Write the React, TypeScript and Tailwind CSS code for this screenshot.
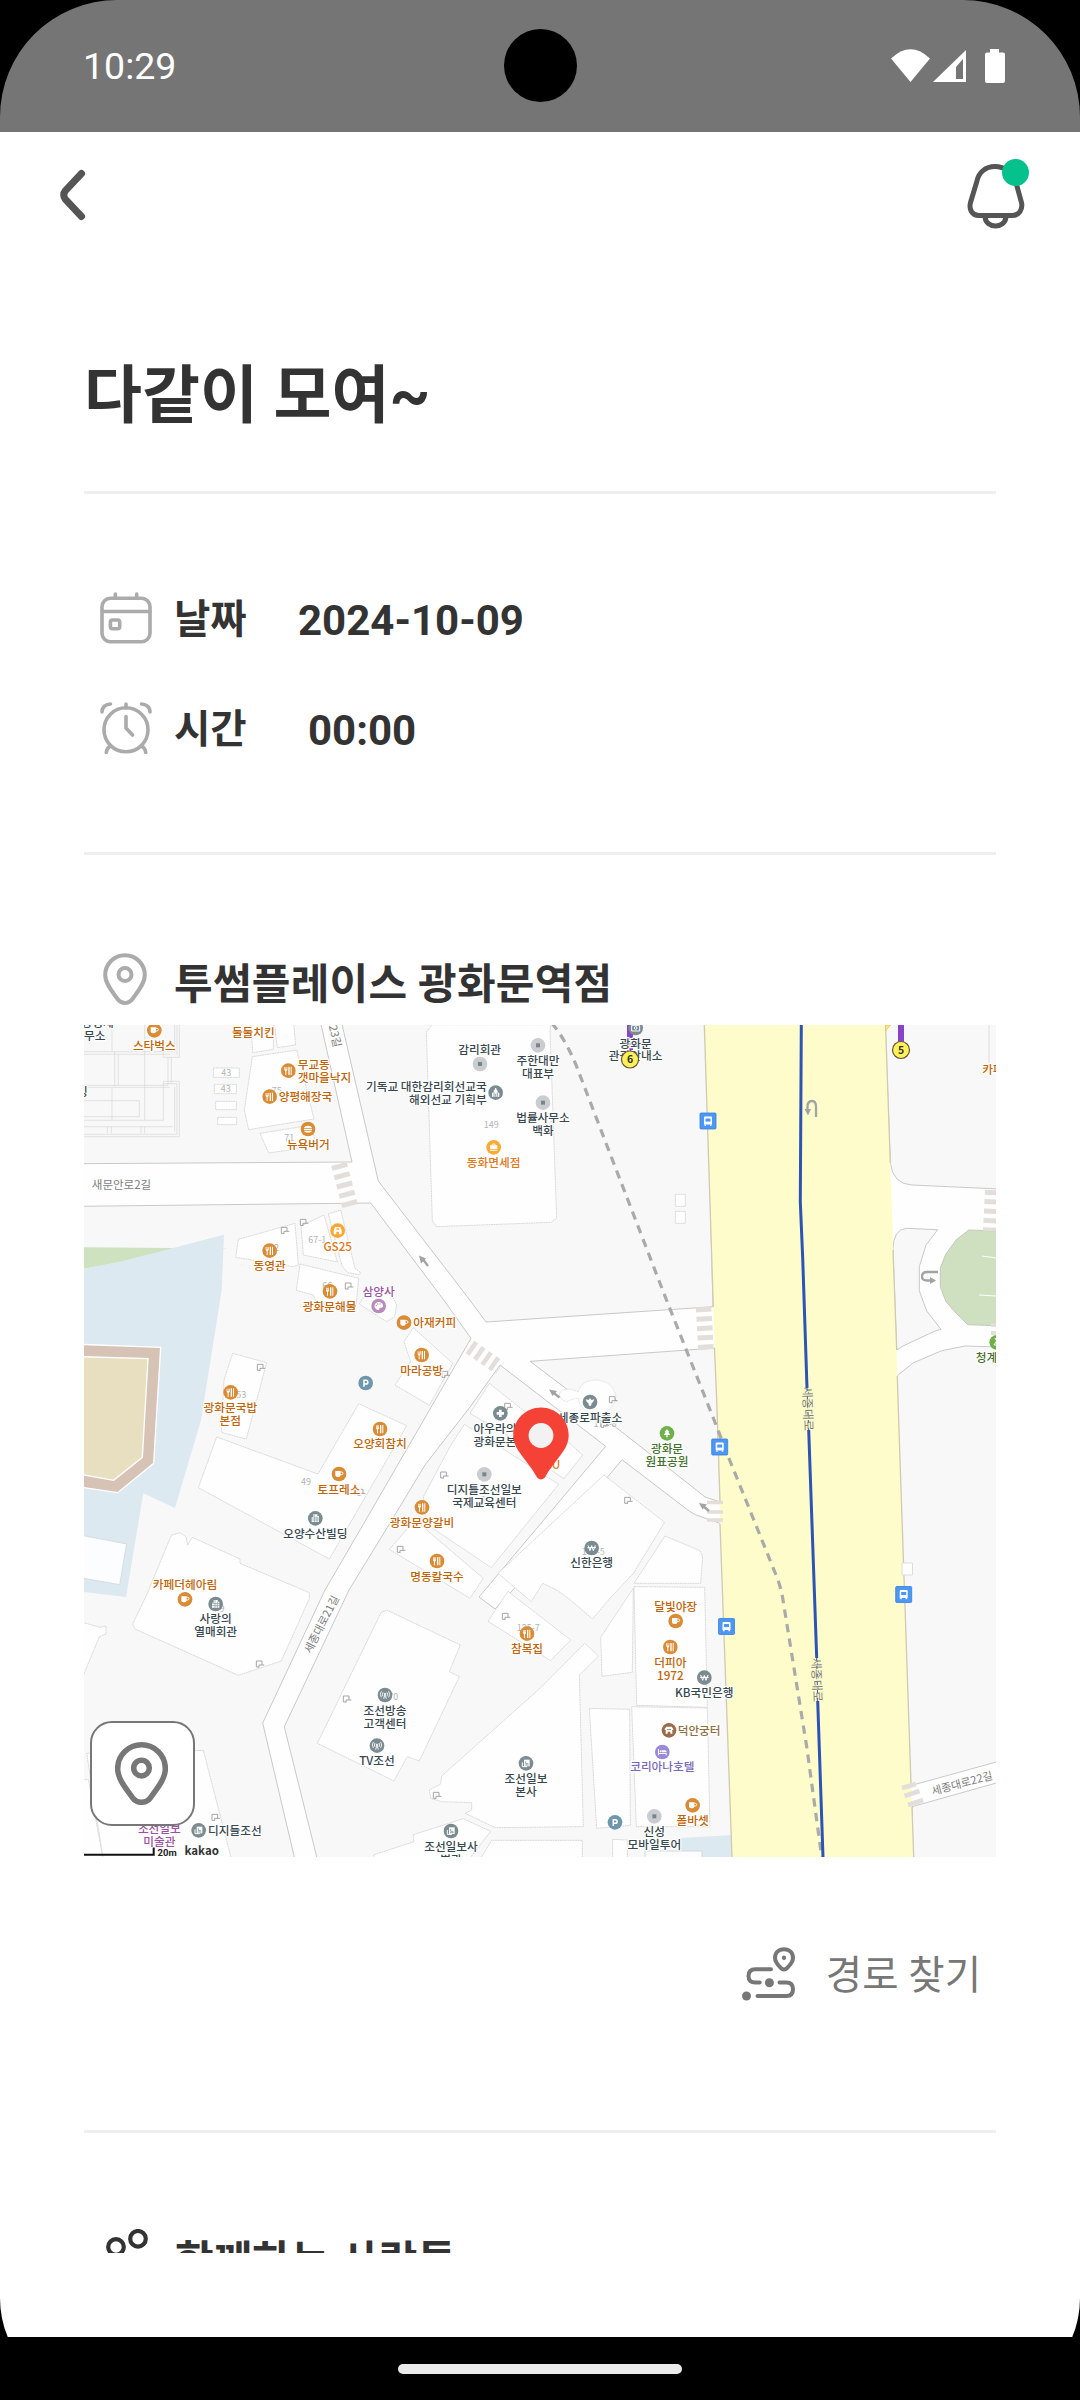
import React from "react";

const KR = "font-['Roboto','Noto_Sans_CJK_KR',sans-serif]";

/* ---------- map data: each tile has its own origin and a 1/3 scale ---------- */

type Poi = [kind: string, x: number, y: number];
type Label = [x: number, y: number, text: string, tone: string, anchor?: "start" | "end" | "middle"];
type Tile = {
  ox: number;
  oy: number;
  buildings?: string[];
  doors?: [number, number][];
  numbers?: [number, number, string][];
  pois?: Poi[];
  labels?: Label[];
};

const TONE: Record<string, string> = {
  food: "#c06408",
  shop: "#e07818",
  dark: "#37474f",
  art: "#9a52a0",
  park: "#43702c",
  hotel: "#7868b8",
  site: "#8d6e3c",
};

const TILES: Tile[] = [
  {
    ox: 80,
    oy: 1020,
    buildings: [
      "400,144 478,144 478,172 400,172",
      "403,193 469,193 469,221 403,221",
      "407,244 469,244 469,269 407,269",
      "413,292 470,292 470,314 413,314",
      "512,0 580,0 580,88 518,98",
      "582,0 640,0 647,75 592,83",
      "517,110 650,90 702,297 506,329 493,270",
      "540,340 690,316 712,378 566,399",
      "475,658 645,610 655,735 640,740 467,712",
      "663,618 732,585 772,726 670,705",
      "745,582 782,570 825,745 842,758 838,764 803,758 786,738",
      "660,732 836,775 828,860 710,850 700,825 649,811",
    ],
    doors: [[604, 622], [661, 598], [796, 789]],
    numbers: [[439, 158, "43"], [437, 205, "43"], [590, 213, "75"], [628, 354, "71"], [712, 658, "67-1"], [582, 684, "62"], [742, 798, "66"], [628, 165, "8"]],
    pois: [["cup", 223, 31], ["fork", 625, 152], ["fork", 569, 230], ["burger", 684, 327], ["store", 773, 632], ["fork", 569, 692], ["fork", 750, 814]],
    labels: [
      [53, 8, "공영제", "dark"],
      [44, 46, "무소", "dark"],
      [7, 216, "빙", "dark"],
      [223, 76, "스타벅스", "food"],
      [520, 38, "둘둘치킨", "food"],
      [653, 135, "무교동", "food", "start"],
      [653, 173, "갯마을낙지", "food", "start"],
      [596, 230, "양평해장국", "food", "start"],
      [685, 373, "뉴욕버거", "food"],
      [773, 679, "GS25", "shop"],
      [569, 738, "동영관", "food"],
    ],
  },
  {
    ox: 360,
    oy: 1020,
    buildings: [
      "212,20 199,36 217,603 230,620 574,607 590,594 570,30 573,14 214,14",
      "946,523 976,523 976,559 946,559",
      "946,574 976,574 976,610 946,610",
    ],
    numbers: [[394, 314, "149"], [574, 306, "3"]],
    pois: [["plain", 534, 76], ["plain", 360, 132], ["church", 407, 218], ["plain", 549, 248], ["bag", 401, 382], ["camera", 827, 24]],
    labels: [
      [359, 90, "감리회관", "dark"],
      [534, 122, "주한대만", "dark"],
      [534, 160, "대표부", "dark"],
      [380, 199, "기독교 대한감리회선교국", "dark", "end"],
      [380, 239, "해외선교 기획부", "dark", "end"],
      [549, 293, "법률사무소", "dark"],
      [549, 332, "백화", "dark"],
      [401, 428, "동화면세점", "shop"],
      [827, 70, "광화문", "dark"],
      [827, 108, "관광안내소", "dark"],
      [56, 814, "삼양사", "art"],
    ],
  },
  {
    ox: 80,
    oy: 1290,
    buildings: [
      "458,190 560,218 499,447 424,427 432,270",
      "410,441 714,552 836,341 980,407 748,807 355,593",
      "848,25 925,-5 950,45 944,80 920,95 838,42",
    ],
    doors: [[532, 223], [832, 598]],
    numbers: [[484, 314, "53"], [678, 576, "49"]],
    pois: [["art", 896, 48], ["fork", 452, 307], ["parking", 857, 279], ["fork", 900, 417], ["cup", 777, 552], ["tower", 706, 685]],
    labels: [
      [749, 50, "광화문해물", "food"],
      [451, 353, "광화문국밥", "food"],
      [451, 392, "본점", "food"],
      [900, 461, "오양회참치", "food"],
      [777, 599, "토프레소", "food"],
      [706, 731, "오양수산빌딩", "dark"],
    ],
  },
  {
    ox: 360,
    oy: 1290,
    buildings: [
      "160,113 278,220 208,346 105,285 152,215 132,155",
      "388,280 520,385 450,440 330,370",
      "313,403 596,583 394,833 200,703 190,620 270,470",
      "580,415 668,495 612,566 520,505",
      "165,690 370,865 330,925 88,778",
      "732,555 914,697 820,850 748,927 698,987 625,925 590,900 548,880 514,935 414,850",
      "915,738 1020,782 1028,800 1022,880 822,880",
    ],
    doors: [[434, 340], [748, 320], [246, 244], [242, 546], [112, 769], [794, 622], [723, 394]],
    numbers: [[700, 785, "175-5"], [735, 400, "175-8"], [378, 628, "16"], [712, 326, "1"]],
    pois: [["cup", 132, 98], ["fork", 185, 195], ["cross", 421, 370], ["police", 690, 336], ["tree", 921, 430], ["plain", 373, 553], ["fork", 186, 652], ["fork", 231, 813], ["won", 695, 774]],
    labels: [
      [160, 98, "아재커피", "food", "start"],
      [185, 241, "마라공방", "food"],
      [421, 416, "아우라의원", "dark"],
      [421, 455, "광화문본점", "dark"],
      [690, 382, "세종로파출소", "dark"],
      [921, 476, "광화문", "park"],
      [921, 515, "원표공원", "park"],
      [373, 599, "디지틀조선일보", "dark"],
      [373, 638, "국제교육센터", "dark"],
      [186, 698, "광화문양갈비", "food"],
      [231, 859, "명동칼국수", "food"],
      [695, 819, "신한은행", "dark"],
      [577, 524, "CU", "shop"],
    ],
  },
  {
    ox: 80,
    oy: 1580,
    buildings: [
      "200,45 268,-120 275,-135 300,-142 318,-130 323,-105 337,-128 480,-63 480,-50 688,38 688,55 604,243 475,286 165,147 158,132",
      "920,90 1141,195 1108,275 1138,290 1018,543 982,530 942,603 712,490 903,98",
      "0,602 25,598 70,840 0,840",
      "20,520 370,511 455,840 70,840",
      "0,125 60,142 78,138 78,162 58,170 0,310",
    ],
    doors: [[529, 243], [790, 348], [396, 703]],
    numbers: [[426, 85, "9"], [940, 350, "70"]],
    pois: [["cup", 315, 58], ["tower", 407, 72], ["radio", 915, 345], ["radio", 891, 497], ["news", 356, 751]],
    labels: [
      [315, 14, "카페더헤아림", "food"],
      [407, 117, "사랑의", "dark"],
      [407, 156, "열매회관", "dark"],
      [915, 391, "조선방송", "dark"],
      [915, 430, "고객센터", "dark"],
      [891, 543, "TV조선", "dark"],
      [238, 747, "조선일보", "art"],
      [238, 785, "미술관", "art"],
      [384, 751, "디지들조선", "dark", "start"],
    ],
  },
  {
    ox: 380,
    oy: 1580,
    buildings: [
      "384,34 572,180 512,242 324,124",
      "614,190 656,228 598,285 610,740 346,743 255,700 275,690 275,668 185,665 152,655 148,630 182,612 185,588 480,325",
      "100,764 250,716 332,754 250,860 0,860 -20,825 102,785",
      "305,830 335,781 607,781 607,860 290,860",
      "760,25 757,277 666,289 662,172",
      "762,20 974,22 982,382 770,376",
      "755,380 982,384 990,740 769,740",
      "628,385 749,388 751,736 650,745",
      "698,778 742,780 742,860 698,860",
    ],
    doors: [[367, 100], [160, 637]],
    numbers: [[445, 142, "125-7"]],
    pois: [["fork", 441, 161], ["cup", 887, 123], ["fork", 871, 201], ["won", 973, 293], ["site", 867, 451], ["bed", 847, 516], ["news", 438, 550], ["cup", 938, 676], ["plain", 823, 709], ["parking", 705, 727], ["news", 213, 753]],
    labels: [
      [441, 207, "참복집", "food"],
      [887, 80, "달빛야장", "food"],
      [871, 247, "더피아", "food"],
      [871, 287, "1972", "food"],
      [973, 338, "KB국민은행", "dark"],
      [893, 452, "덕안궁터", "site", "start"],
      [847, 560, "코리아나호텔", "hotel"],
      [438, 596, "조선일보", "dark"],
      [438, 635, "본사", "dark"],
      [938, 722, "폴바셋", "food"],
      [823, 755, "신성", "dark"],
      [823, 794, "모바일투어", "dark"],
      [213, 799, "조선일보사", "dark"],
      [213, 838, "별관", "dark"],
    ],
  },
];

const BADGE: Record<string, string> = {
  fork: "#d98b35",
  cup: "#d98b35",
  burger: "#d98b35",
  store: "#f9a732",
  bag: "#fbaa33",
  art: "#b98bbd",
  parking: "#6f97ac",
  tree: "#6fb04a",
  site: "#9a6c4a",
  bed: "#9a8ad6",
  plain: "#cbccd0",
};

function Glyph({ kind }: { kind: string }) {
  switch (kind) {
    case "fork":
      return (
        <g fill="#fff">
          <path d="M-12-11h2v7h1.500v-7h2v7h1.500v-7h2V-2l-3 4v11h-3V2l-3-4z" />
          <path d="M0-12h4v25h-4zM7-12h3v25h-3z" />
        </g>
      );
    case "cup":
      return (
        <g>
          <path d="M-11 -9H5V3a6 6 0 0 1-6 6h-4a6 6 0 0 1-6-6z" fill="#fff" />
          <path d="M5 -6h3a4 4 0 0 1 0 8H4" fill="none" stroke="#fff" strokeWidth="3" />
        </g>
      );
    case "burger":
      return <path d="M-12-2c0-10 24-10 24 0zM-12 0h24v3h-24zM-12 5h24c0 7-24 7-24 0z" fill="#fff" />;
    case "store":
      return <path fillRule="evenodd" d="M-8-11H8l4 10v12H4V3h-8v8h-8V-1zM-4-7v4h8v-4z" fill="#fff" />;
    case "bag":
      return (
        <g fill="#fff">
          <path d="M-11-6h22v11h-22zM-11 7h22v3h-22z" />
          <path d="M-4-6v-4h8v4" fill="none" stroke="#fff" strokeWidth="2.5" />
        </g>
      );
    case "art":
      return (
        <g>
          <path d="M0-12C-18-10-15 12 0 12c4 0 0-6 4-7s9 1 9-6S7-12 0-12z" fill="#fff" />
          <g fill="#b98bbd">
            <circle cx="-7" cy="-1" r="2" />
            <circle cx="-3" cy="-6" r="2" />
            <circle cx="4" cy="-6" r="2" />
          </g>
        </g>
      );
    case "plain":
      return <path d="M-6-6H6V6H-6z" fill="#78868c" />;
    case "tower":
      return (
        <g>
          <path d="M-6-12H6v5h5v18H-11V-4h5z" fill="#fff" />
          <path d="M-11-1H11M-11 5H11M-2-12V11M5-6V11" stroke="#7b8b92" strokeWidth="1.8" />
        </g>
      );
    case "church":
      return (
        <g>
          <path d="M-2-14H2v4l4 4v5l5 2v11h-22V1l5-2v-5l4-4z" fill="#fff" />
          <path d="M-5-1V12M5-1V12M0 3v9" stroke="#7b8b92" strokeWidth="2.4" />
        </g>
      );
    case "cross":
      return <path d="M-4-11h8v7h7v8h-7v7h-8v-7h-7v-8h7z" fill="#fff" />;
    case "camera":
      return (
        <g fill="none" stroke="#fff" strokeWidth="3">
          <path d="M-12-8h24V9h-24z" />
          <circle r="4" />
        </g>
      );
    case "police":
      return <path d="M-13-8l9 2 4-6 4 6 9-2-4 9-4 2-1 6-4 4-4-4-1-6-4-2z" fill="#fff" />;
    case "tree":
      return <path d="M0-13l7 9H4l6 9H2v7h-4v-7h-8l6-9h-3z" fill="#fff" />;
    case "radio":
      return (
        <g fill="none" stroke="#fff" strokeWidth="2.6">
          <path d="M-6-8q-4 6 0 12M6-8q4 6 0 12M-11-11q-6 9 0 18M11-11q6 9 0 18M0-2l-4 14M0-2l4 14" />
          <circle cy="-3" r="2" fill="#fff" />
        </g>
      );
    case "news":
      return (
        <g>
          <path d="M-6-11h17v20h-17z" fill="#fff" />
          <path d="M-11-3v13h14" fill="none" stroke="#fff" strokeWidth="3" />
          <path d="M-1-6v7h8M-3 5H8" fill="none" stroke="#7b8b92" strokeWidth="2.4" />
        </g>
      );
    case "site":
      return <path fillRule="evenodd" d="M-13-4l5-7H8l5 7v3h-3v11h-6V4h-8v6h-6V-1h-3zM-6-4H6v2H-6z" fill="#fff" />;
    case "bed":
      return (
        <g fill="#fff">
          <path d="M-13-9h3V3h23v7h-3V6h-20v4h-3z" />
          <path d="M-1-5H9q4 0 4 6H-1z" />
          <circle cx="-5" cy="-2" r="3" />
        </g>
      );
    case "won":
      return <path d="M-11-8L-5 8 0-7 5 8 11-8M-13-1H13" fill="none" stroke="#fff" strokeWidth="3" />;
    case "parking":
      return <path d="M-5 11V-8H1a5.5 5.5 0 0 1 0 11H-5" fill="none" stroke="#fff" strokeWidth="4.6" />;
    default:
      return null;
  }
}

function MapLabel({ x, y, text, tone, anchor = "middle" }: { x: number; y: number; text: string; tone: string; anchor?: "start" | "end" | "middle" }) {
  return (
    <text
      x={x}
      y={y + 13}
      textAnchor={anchor}
      fill={TONE[tone]}
      stroke="#fff"
      strokeWidth="7"
      strokeLinejoin="round"
      paintOrder="stroke"
      className="text-[35px] font-medium font-['Noto_Sans_CJK_KR',sans-serif]"
    >
      {text}
    </text>
  );
}

function BusStop({ x, y }: { x: number; y: number }) {
  return (
    <g transform={`translate(${x} ${y})`}>
      <rect x="-8" y="-8" width="16" height="16" rx="1" fill="#4c97f4" stroke="#357fe0" strokeWidth=".8" />
      <path d="M-4 -3.5q0-1 1-1h6q1 0 1 1V3.5H-4z" fill="#fff" />
      <path d="M-2.5-2.5h5V.6h-5z" fill="#4c97f4" />
      <path d="M-3.5 3.5h1.5v1.3h-1.5zM2 3.5h1.5v1.3H2z" fill="#fff" />
    </g>
  );
}

const WAY = "#c9c9c9";

function StreetMap() {
  return (
    <svg viewBox="84 1025 912 832" className="block h-[832px] w-[912px]">
      <rect x="84" y="1025" width="912" height="832" fill="#fefefe" />
      {/* city blocks between the streets */}
      <g fill="#f8f8f8" stroke={WAY} strokeWidth="1">
        <path d="M80 1020H320L352 1162 80 1163.7z" />
        <path d="M80 1206.3L370.7 1203 443 1299 471 1338.3 360 1530 325 1590 262.7 1723 295 1860H80z" />
        <path d="M341 1020L378.3 1181 469 1299 486 1322 713 1306.7 706 1020z" />
        <path d="M530 1361.3L716 1348 720 1502 705 1497 690 1485 616.7 1428 566.7 1389z" />
        <path d="M500 1365L605.7 1446.3 479 1597 495 1609 513 1590 622 1459.7 690 1511.7 696 1515 722 1524 733 1860H317.5L284.3 1726.7 349 1590 390 1523 425 1465 471 1405.7z" />
        <path d="M885 1020L890.3 1163Q893 1184 911.7 1185L1000 1189V1020z" />
        <path d="M896.7 1350L893 1250Q893 1229 906.7 1228.3L937.7 1229.7 926 1245 919.3 1266.7V1290.7L926.7 1311 941 1329.3 935 1331 903 1346z" />
        <path d="M897.3 1375.7L913 1363 941.7 1350.7 965 1346 1000 1347V1761L903 1787.7z" />
        <path d="M912 1806.7L1000 1782V1860H913z" />
      </g>
      <path d="M997 1231L968.7 1230 956 1240 945.7 1254.3 940.3 1268V1286.7L946 1301.7 956 1313 967.7 1324.7 997 1325.7z" fill="#cfe0c0" stroke="#c5c9c0" />
      <path d="M982 1256l14 2M979 1295l17 1" stroke="#fff" />
      <path d="M989 1025v38" stroke="#ddd" />

      {/* water, lawn and the arena */}
      <path d="M84 1247.3L227 1248.5 123 1262 84 1268.7z" fill="#cfe2c0" />
      <path d="M84 1268.7L123 1261 224 1234.7 221.7 1290 201 1420 175 1508 143.3 1493.3 126 1597 84 1592z" fill="#dce9f0" />
      <g transform="translate(80 1290) scale(.33333)">
        <path d="M0 163L242 172 221 520 113 608 0 591z" fill="#d7c2b6" stroke="#fff" strokeWidth="4" />
        <path d="M0 200L204 206 187 502 101 571 0 553z" fill="#e8dfc0" stroke="#fff" strokeWidth="4" />
        <path d="M0 735L140 762 119 884 0 863z" fill="#fbfdfe" stroke="#d3d9dc" strokeWidth="2.5" />
      </g>
      <path d="M680 1838L733 1835V1857H680z" fill="#dce9f0" />
      <path d="M645 1851h57v8h-57z" fill="#fbfdfe" stroke="#d3d9dc" />

      {/* parking structure outline */}
      <g transform="translate(80 1020) scale(.33333)" fill="none" stroke="#d6d6d6" strokeWidth="2">
        <path d="M96 0V95M194 0V300M104 95V200M115 103V195M12 95H280M12 103H270M298 0V112H250V95M291 0V105M284 0V98M274 112V190M264 112V196M12 202H270M12 196H264M96 205V300M12 242H178V290H12M12 301H250V184H298V350H12M250 191H291V343H12M284 200V335M12 320H278M82 320V340M94 320V340M183 320V340M194 320V340" />
      </g>

      {/* crosswalks */}
      <g stroke="#e3deda" fill="none">
        <path d="M339 1164L350 1206" strokeWidth="16" strokeDasharray="5 4.6" />
        <path d="M470 1347L500 1368" strokeWidth="15" strokeDasharray="4.6 4.4" />
        <path d="M703.5 1307L706 1350" strokeWidth="15.5" strokeDasharray="5 4.4" />
        <path d="M992 1190L990 1231" strokeWidth="14" strokeDasharray="5 4.4" />
        <path d="M994 1323v14" strokeWidth="6" strokeDasharray="4 4" />
      </g>

      {/* boulevard */}
      <path d="M704.3 1025L713.3 1306.7 716.7 1400 720 1523 732 1857H913.7L898 1400 896.7 1350 890.3 1163 885.7 1025z" fill="#fffccc" />
      <path d="M704.3 1025L713.3 1306.7M714.5 1348L716.7 1400 720 1501M720 1524L732 1857M885.7 1030L890.3 1163M893 1250L896.7 1350M897.3 1376L898 1400 911 1784M912 1807L913.7 1857" fill="none" stroke="#cfcab2" strokeWidth="1.3" />
      <path d="M885.5 1031l5-6h-5z" fill="#ffe680" stroke="#e0b050" strokeWidth=".6" />
      <g stroke="#e3deda" fill="none" strokeWidth="4.5">
        <path d="M707 1502.5h16M707 1512h16M707 1520h16" strokeWidth="3.5" />
        <path d="M902 1788l14-4M904.5 1796l15-5M908 1805l15-5" />
      </g>
      <path d="M902 1563h10.5v12H902z" fill="#fefefe" stroke="#ddd" />

      {/* buildings, lots and entrances */}
      {TILES.map((t) => (
        <g key={`b${t.ox}-${t.oy}`} transform={`translate(${t.ox} ${t.oy}) scale(.33333)`}>
          {t.buildings?.map((p) => (
            <polygon key={p} points={p} fill="#fefefe" stroke="#d4d4d4" strokeWidth="2.6" strokeDasharray="6 1.5" />
          ))}
          {t.numbers?.map(([x, y, n]) => (
            <text key={`${x}-${y}`} x={x} y={y + 10} textAnchor="middle" fill="#b4b4b4" className="text-[27px] font-['Noto_Sans_CJK_KR',sans-serif]">
              {n}
            </text>
          ))}
          {t.doors?.map(([x, y]) => (
            <path key={`${x}-${y}`} d={`M${x + 8} ${y + 18}h-8v-18h17v12M${x + 8} ${y + 20}v-8h16`} fill="none" stroke="#a0a0a0" strokeWidth="2.8" />
          ))}
        </g>
      ))}
      <g transform="translate(360 1290) scale(.33333)">
        <path d="M655 305Q665 270 710 270 760 275 768 320 760 365 710 375 660 365 655 325 640 325 620 335 600 330 598 312 605 292 640 300z" fill="#fefefe" stroke="#d9d9d9" strokeWidth="2.4" strokeDasharray="5 2" />
        <path d="M756 338h-8v-18h17v12M756 340v-8h16" fill="none" stroke="#a0a0a0" strokeWidth="2.8" />
      </g>

      {/* one-way arrows and U-turns */}
      <g fill="none" stroke="#a3a3a3" strokeWidth="2.3">
        <path d="M428 1266l-6-8M559.5 1397.5l-7-5.5M709 1511l-6-5" />
        <path d="M816 1117v-10q0-6-4-6-4.5 0-4.5 6v5M938 1272h-11q-5 0-5 4.5 0 4 5 4h6" />
      </g>
      <g fill="#a3a3a3">
        <path d="M419 1255.5l7 3-5 5zM549 1389.5l8 1.5-4.5 5zM699 1503l8 1.5-4.5 5zM804.5 1109h6.5l-3 6.5zM930 1277v7l6-3.5z" />
      </g>

      {/* tunnel and metro line */}
      <path
        d="M551.7 1023Q566 1040 576.7 1066.7L606.7 1145 665.7 1298 713.3 1418 728.3 1456.7 776 1575Q781 1587 783 1600L806.7 1746.7 822 1859"
        fill="none"
        stroke="#aaaaaa"
        strokeWidth="3.2"
        strokeDasharray="8.4 6.3"
      />
      <path d="M801.3 1025L800.3 1201.7 802.7 1258 807 1388M808.7 1430L816.7 1658M817.7 1701L823 1857" fill="none" stroke="#2d53b4" strokeWidth="3" />
      <path d="M807 1388l1.7 42M816.7 1658l1 43" fill="none" stroke="#2d53b4" strokeWidth="1" strokeDasharray="3 5" />
      <path d="M901 1025v18M630 1025v30" stroke="#8843c8" strokeWidth="6" />

      {/* road names */}
      <g fill="#7d7d7d" textAnchor="middle" className="text-[11px] font-['Noto_Sans_CJK_KR',sans-serif]">
        <text x="121.5" y="1189" className="text-[11.5px]">새문안로2길</text>
        <text transform="translate(325 1626) rotate(-63)">세종대로21길</text>
        <text transform="translate(963 1787) rotate(-15)">세종대로22길</text>
        <text transform="translate(803.5 1409) rotate(88)" className="text-[12px]">세종대로</text>
        <text transform="translate(812.5 1680) rotate(88)" className="text-[12px]">세종대로</text>
        <text transform="translate(329 1027) rotate(77)">종로23길</text>
      </g>

      {/* points of interest */}
      {TILES.map((t) => (
        <g key={`p${t.ox}-${t.oy}`} transform={`translate(${t.ox} ${t.oy}) scale(.33333)`}>
          {t.pois?.map(([k, x, y]) => (
            <g key={`${x}-${y}`} transform={`translate(${x} ${y})`}>
              <circle r="22" fill={BADGE[k] ?? "#7b8b92"} />
              <Glyph kind={k} />
            </g>
          ))}
          {t.labels?.map(([x, y, text, tone, anchor]) => (
            <MapLabel key={`${x}-${y}`} x={x} y={y} text={text} tone={tone} anchor={anchor} />
          ))}
        </g>
      ))}
      <g transform="translate(670 1020) scale(.33333)">
        <circle cx="980" cy="967" r="22" fill="#6fb04a" />
        <path d="M975 954l5 9-8 12h8" fill="none" stroke="#fff" strokeWidth="3" />
        <MapLabel x={917} y={1012} text="청계광장" tone="park" anchor="start" />
        <MapLabel x={937} y={150} text="카페" tone="food" anchor="start" />
      </g>
      {[
        [901, 1050, "5"],
        [630, 1059.5, "6"],
      ].map(([x, y, n]) => (
        <g key={n}>
          <circle cx={x} cy={y} r="8.5" fill="#fff15a" stroke="#6b5134" strokeWidth="1.2" />
          <text x={x} y={Number(y) + 3.8} textAnchor="middle" fill="#333" className="text-[10.5px] font-bold font-['Noto_Sans_CJK_KR',sans-serif]">
            {n}
          </text>
        </g>
      ))}
      <BusStop x={708} y={1121} />
      <BusStop x={719.7} y={1447} />
      <BusStop x={726.5} y={1626.5} />
      <BusStop x={903.7} y={1594.5} />

      {/* selected place */}
      <path d="M541 1407.5c-15.3 0-27.7 12.2-27.7 27.7 0 5.3 1.7 10 4.3 14.3 5 8 13.8 17.5 19.2 27.5 2 3.2 6.4 3.2 8.4 0 5.4-10 14.2-19.5 19.2-27.5 2.6-4.3 4.3-9 4.3-14.3 0-15.5-12.4-27.7-27.7-27.7z" fill="#f44336" />
      <circle cx="541" cy="1435.5" r="12.4" fill="#f2f2f2" />

      {/* scale bar */}
      <path d="M84 1854.7H153.7V1847.5" fill="none" stroke="#111" strokeWidth="2" />
      <text x="157.5" y="1856" fill="#222" stroke="#fff" strokeWidth="1.5" paintOrder="stroke" className="text-[9.5px] font-bold font-['Roboto',sans-serif]">20m</text>
      <text x="184.5" y="1855" fill="#333" className="text-[11.5px] font-bold font-['Noto_Sans_CJK_KR',sans-serif]">kakao</text>
    </svg>
  );
}

/* ---------- interface icons ---------- */

function PinOutline({ className, sw }: { className: string; sw: number }) {
  return (
    <svg viewBox="0 0 44 52" className={className} fill="none" stroke="currentColor" strokeWidth={sw}>
      <path d="M22 2.2C11 2.2 2.2 11 2.2 22c0 8.5 7 16.5 12.3 24 3.8 5.2 11.2 5.2 15 0C34.8 38.5 41.8 30.5 41.8 22 41.8 11 33 2.2 22 2.2z" />
      <circle cx="22" cy="21.5" r="6.5" />
    </svg>
  );
}

function CalendarIcon() {
  return (
    <svg viewBox="0 0 52 52" className="h-[52px] w-[52px] shrink-0" fill="none" stroke="#ababab" strokeWidth="3.6" strokeLinecap="round">
      <rect x="2" y="6.2" width="48" height="43.5" rx="8.5" />
      <path d="M2 19.5H50M15.3 2V6M36.7 2V6" />
      <rect x="10.4" y="28" width="9.3" height="8.8" rx="2" />
    </svg>
  );
}

function ClockIcon() {
  return (
    <svg viewBox="0 0 52 52" className="h-[52px] w-[52px] shrink-0" fill="none" stroke="#ababab" strokeWidth="3.6" strokeLinecap="round" strokeLinejoin="round">
      <circle cx="26" cy="27.8" r="22" />
      <path d="M26 2V6M26 14.5V26l6.5 7M2 10C2 5 6 2 10.5 2M50 10C50 5 46 2 41.5 2M10.5 44Q6.5 46.5 6.3 50.5M41.5 44Q45.5 46.5 45.7 50.5" />
    </svg>
  );
}

function BellIcon() {
  return (
    <svg viewBox="0 0 62 70" className="h-[70px] w-[62px] overflow-visible">
      <path d="M29 7.5C19.5 7.500 12.500 13.500 11 22L4.500 43.500C2.700 50.500 6.200 56.500 12.700 56.500H46.500C53 56.500 57 50.500 55.500 43.500L49.500 22C47.500 13.500 38.500 7.500 29 7.500z" fill="none" stroke="#555" strokeWidth="5" />
      <path d="M19 58C20 70 39 70 40 58" fill="none" stroke="#555" strokeWidth="5" />
      <circle cx="49.5" cy="13.5" r="13.5" fill="#05c18c" />
    </svg>
  );
}

function RouteIcon() {
  return (
    <svg viewBox="0 0 54 54" className="h-[54px] w-[54px]" fill="none" stroke="#777" strokeWidth="4" strokeLinecap="round">
      <path d="M42 2.2C36.5 2.2 33 6 33 11c0 4 3 7.2 6 10.2 1.7 1.8 4.3 1.8 6 0 3-3 6-6.2 6-10.2 0-5-3.5-8.8-9-8.8z" />
      <circle cx="42" cy="10.8" r="2.2" fill="#777" stroke="none" />
      <path d="M29 22.3H13.5Q6.5 22.3 6.5 29T13.5 35.5H17.7M37.5 35.5H44.5Q51 35.5 51 42.2T44.5 49H15.5" />
      <circle cx="27.4" cy="35.7" r="4.5" fill="#777" stroke="none" />
      <circle cx="4.5" cy="49" r="4.5" fill="#777" stroke="none" />
    </svg>
  );
}

function PeopleIcon() {
  return (
    <svg viewBox="0 0 60 60" className="h-[60px] w-[60px] shrink-0" fill="none" stroke="#333" strokeWidth="4.2">
      <circle cx="20" cy="18" r="7.8" />
      <circle cx="42" cy="9.8" r="7.8" />
    </svg>
  );
}

function StatusBar() {
  return (
    <div className="relative flex h-[132px] shrink-0 items-center justify-between bg-[#757575] pl-[83px] pr-[75px] text-white">
      <span className="pt-[2px] text-[37.5px] leading-none font-['Roboto',sans-serif]">10:29</span>
      <div className="absolute left-[503.5px] top-[29px] h-[73px] w-[73px] rounded-full bg-black" />
      <svg viewBox="891 49 114 34" className="h-[34px] w-[114px]" fill="#fff">
        <path d="M891 58.5Q910.5 40 930 58.5L910.5 82z" />
        <path fillRule="evenodd" d="M966 50V82H933zM963 59L956 67V79H963z" />
        <path d="M990 49h9v3.5h4q2 0 2 2V81q0 2-2 2H987q-2 0-2-2V54.5q0-2 2-2h3z" />
      </svg>
    </div>
  );
}

function Divider() {
  return <div className="h-[3px] w-full shrink-0 bg-[#efefef]" />;
}

function DetailRow({ icon, label, value, gap }: { icon: React.ReactNode; label: string; value: string; gap: string }) {
  return (
    <div className="flex h-[110px] items-center pl-4 text-[42px] leading-[60px] text-[#333]">
      {icon}
      <span className="ml-[22px] w-[77px] shrink-0 whitespace-nowrap pt-[4px] text-[39.5px] font-bold">{label}</span>
      <span className={`whitespace-nowrap pt-[5px] font-bold ${gap}`}>{value}</span>
    </div>
  );
}

export default function App() {
  return (
    <div className={`h-[2400px] w-[1080px] overflow-hidden bg-black ${KR}`}>
      <div className="flex h-[2400px] flex-col overflow-hidden rounded-b-[102px] rounded-t-[117px] bg-black">
        <StatusBar />
        <div className="flex h-[2121px] shrink-0 flex-col overflow-hidden bg-white">
          <header className="flex h-[126px] shrink-0 items-start justify-between pl-[58px] pr-[52px] pt-[27px]">
            <svg viewBox="0 0 30 54" className="mt-[9px] h-[54px] w-[30px]" fill="none" stroke="#555" strokeWidth="7" strokeLinecap="round">
              <path d="M23.5 5.5L7.5 22.5Q4 27 7.5 31.5L23.5 48.5" />
            </svg>
            <BellIcon />
          </header>
          <main className="flex flex-col px-[84px]">
            <h1 className="flex h-[233px] items-center pt-[41px] text-[63px] font-bold leading-none text-[#333]">다같이 모여~</h1>
            <Divider />
            <section className="flex h-[358px] flex-col pt-[69px]">
              <DetailRow icon={<CalendarIcon />} label="날짜" value="2024-10-09" gap="ml-[47px]" />
              <DetailRow icon={<ClockIcon />} label="시간" value="00:00" gap="ml-[57px]" />
            </section>
            <Divider />
            <section>
              <div className="flex h-[170px] items-end pb-[10px] pl-[19px] text-[42px] font-bold leading-[60px] text-[#333]">
                <PinOutline className="mb-[10px] h-[52px] w-[44px] text-[#ababab]" sw={4} />
                <h2 className="ml-[27px] tracking-[0.25px]">투썸플레이스 광화문역점</h2>
              </div>
              <div className="relative h-[832px]">
                <StreetMap />
                <button className="absolute left-[6px] top-[696px] flex h-[105px] w-[105px] items-center justify-center rounded-[22px] border-[2.5px] border-[#777] bg-white pr-[2px] text-[#777]">
                  <PinOutline className="h-[63px] w-[53px]" sw={4.6} />
                </button>
              </div>
              <button className="flex h-[273px] w-full items-start justify-end pr-[15px] pt-[89px] text-[39.5px] leading-[60px] text-[#777]">
                <span className="mt-[1px]"><RouteIcon /></span>
                <span className="ml-[30px]">경로 찾기</span>
              </button>
            </section>
            <Divider />
            <section className="flex h-[180px] pl-[12px] pt-[96px] text-[42px] font-bold leading-[60px] text-[#333]">
              <PeopleIcon />
              <h2 className="ml-[19px] pt-[3px]">함께하는 사람들</h2>
            </section>
          </main>
        </div>
        <div className="h-[84px] shrink-0 bg-white" />
        <div className="flex h-[63px] shrink-0 justify-center bg-black pt-[27px]">
          <div className="h-[10px] w-[284px] rounded-[5px] bg-[#ebebeb]" />
        </div>
      </div>
    </div>
  );
}
